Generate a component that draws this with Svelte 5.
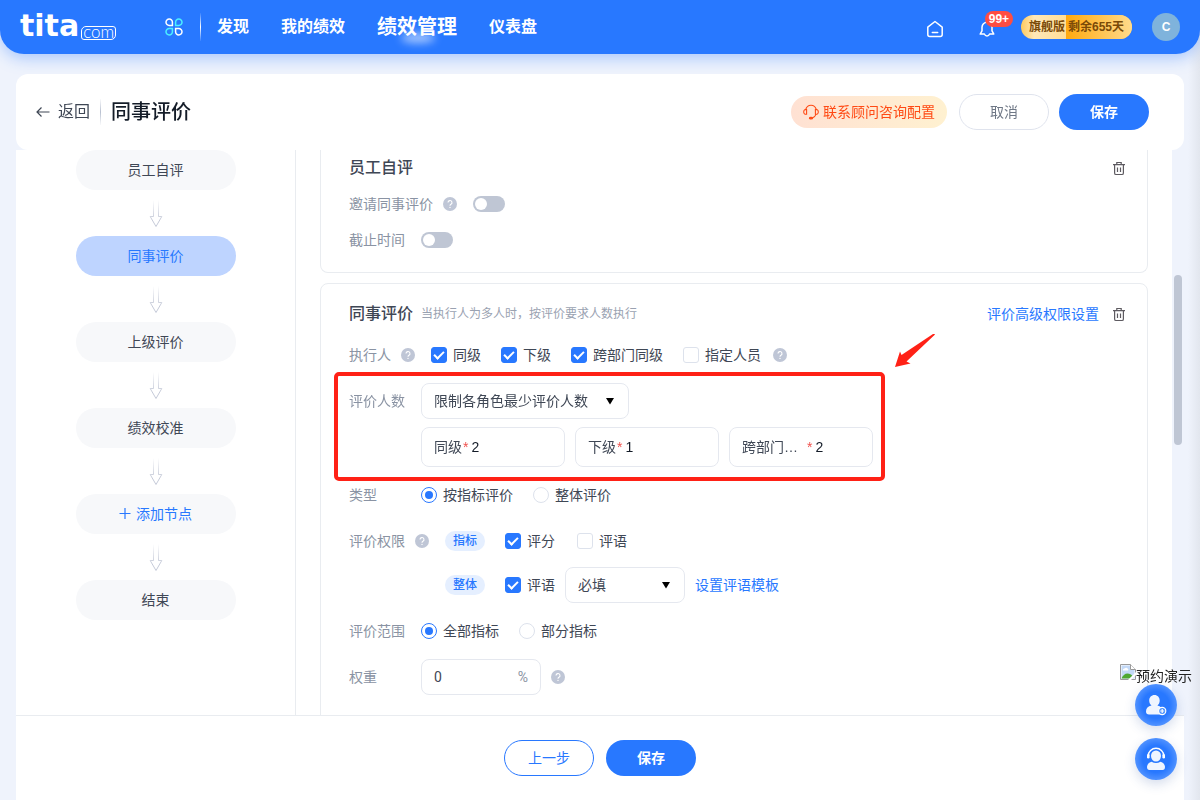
<script lang="ts">
  const nav = [
    { label: '发现', active: false },
    { label: '我的绩效', active: false },
    { label: '绩效管理', active: true },
    { label: '仪表盘', active: false }
  ];

  const steps = [
    { label: '员工自评', kind: '' },
    { label: '同事评价', kind: 'current' },
    { label: '上级评价', kind: '' },
    { label: '绩效校准', kind: '' },
    { label: '添加节点', kind: 'add' },
    { label: '结束', kind: '' }
  ];

  let executors = $state([
    { label: '同级', checked: true },
    { label: '下级', checked: true },
    { label: '跨部门同级', checked: true },
    { label: '指定人员', checked: false }
  ]);

  let counts = $state([
    { id: 'peer', label: '同级', value: '2' },
    { id: 'junior', label: '下级', value: '1' },
    { id: 'cross', label: '跨部门…', short: true, value: '2' }
  ]);

  let invite = $state(false);
  let deadline = $state(false);
  let evalType = $state('item');
  let scope = $state('all');
  let weight = $state('0');
</script>

{#snippet help()}
  <svg class="help" viewBox="0 0 14 14" aria-hidden="true">
    <circle cx="7" cy="7" r="7" fill="#bfc6d6" />
    <path d="M5 5.6a2 2 0 1 1 3 1.7c-.7.4-1 .7-1 1.4" fill="none" stroke="#fff" stroke-width="1.1" />
    <circle cx="7" cy="10.4" r=".7" fill="#fff" />
  </svg>
{/snippet}

{#snippet trash()}
  <button class="trash" aria-label="删除">
    <svg viewBox="0 0 16 16" fill="none" stroke="#5d5a60" stroke-width="1.2">
      <path d="M2 4.700h12M5.800 4.500V2.500h4.400v2M3.600 4.700v8.200q0 1.600 1.400 1.600h6q1.400 0 1.400-1.600V4.700M6.500 7.500v4.400M9.500 7.500v4.400" />
    </svg>
  </button>
{/snippet}

{#snippet caret()}
  <svg class="caret" viewBox="0 0 8 8" aria-hidden="true"><path d="M0 1h8L4 7.400z" fill="#000" /></svg>
{/snippet}

<div class="page">
  <header class="topbar">
    <a class="logo" href="/" aria-label="tita.com">
      <span class="logo-name">tita</span><span class="logo-com">com</span>
    </a>
    <button class="apps" aria-label="应用">
      <svg viewBox="0 0 18 18" fill="none" stroke-width="1.5">
        <path d="M7.400 7.400H4.300A3.200 3.200 0 1 1 7.400 4.300z" stroke="#fff" />
        <path d="M10.600 7.400h3.100a3.200 3.200 0 1 0-3.100-3.100z" stroke="#4cf0ff" />
        <path d="M7.400 10.600H4.300a3.200 3.200 0 1 0 3.100 3.100z" stroke="#4cf0ff" />
        <path d="M10.600 10.600h3.100a3.200 3.200 0 1 1-3.100 3.100z" stroke="#fff" />
      </svg>
    </button>
    <nav>
      {#each nav as item}
        <a href="#{item.label}" class:active={item.active}>{item.label}</a>
      {/each}
    </nav>
    <div class="tools">
      <button class="tool" aria-label="首页">
        <svg viewBox="0 0 18 18" fill="none" stroke="#fff" stroke-width="1.5" stroke-linejoin="round" stroke-linecap="round">
          <path d="M1.800 7.200 9 1.500l7.200 5.700v7.300q0 2-2 2H3.800q-2 0-2-2zM6.300 12.400h5.400" />
        </svg>
      </button>
      <button class="tool bell" aria-label="通知">
        <svg viewBox="0 0 18 18" fill="none" stroke="#fff" stroke-width="1.5" stroke-linejoin="round" stroke-linecap="round">
          <path d="M9 2.200a5 5 0 0 0-5 5v3.600L2.200 14h4.200q.8 2 2.600 2t2.600-2h4.200L14 10.800V7.200a5 5 0 0 0-5-5zM9 1v1" />
        </svg>
        <span class="badge">99+</span>
      </button>
      <div class="plan"><span>旗舰版</span><span class="left-days">剩余655天</span></div>
      <div class="avatar">C</div>
    </div>
  </header>

  <main>
    <div class="titlebar">
      <a class="back" href="#back">
        <svg viewBox="0 0 14 14" fill="none" stroke="#3f4755" stroke-width="1.2"><path d="M13.500 7H1M5.500 2.500 1 7l4.500 4.500" /></svg>
        返回
      </a>
      <h1>同事评价</h1>
      <div class="actions">
        <button class="consult">
          <svg viewBox="0 0 16 16" fill="none" stroke="#ff4a14" stroke-width="1.1" stroke-linecap="round">
            <path d="M2.600 5.600C3.500 2.700 5.500 1.300 8 1.300s4.500 1.400 5.400 4.300M3.600 5.400v4.800C1.900 10.600.7 9.600.7 7.900s1.200-2.700 2.900-2.500M12.400 5.400c1.700-.2 2.900.8 2.900 2.500s-1.200 2.700-2.900 2.300zM13 10.400q-1.200 3-3.600 3.600" />
            <ellipse cx="8" cy="14.200" rx="1.600" ry=".8" fill="#ff4a14" />
          </svg>
          联系顾问咨询配置
        </button>
        <button class="btn plain">取消</button>
        <button class="btn primary">保存</button>
      </div>
    </div>

    <div class="workspace">
      <aside class="flow">
        {#each steps as step, i}
          {#if i > 0}
            <svg class="flow-arrow" viewBox="0 0 14 46" fill="none" aria-hidden="true">
              <defs>
                <linearGradient id="fade{i}" gradientUnits="userSpaceOnUse" x1="0" y1="10" x2="0" y2="30">
                  <stop offset="0" stop-color="#c5cad8" stop-opacity="0" />
                  <stop offset="1" stop-color="#c5cad8" />
                </linearGradient>
              </defs>
              <path d="M4.500 10v16.500H1.200L7 36.500l5.800-10H9.500V10" stroke="url(#fade{i})" />
            </svg>
          {/if}
          <button class="step {step.kind}">
            {#if step.kind === 'add'}
              <svg viewBox="0 0 12 12" stroke="#2878ff" stroke-width="1.2"><path d="M6 0v11M.5 5.500h11" /></svg>
            {/if}
            {step.label}
          </button>
        {/each}
      </aside>

      <div class="content">
        <section class="card clipped">
          <div class="card-head">
            <h2>员工自评</h2>
            {@render trash()}
          </div>
          <div class="row">
            <label class="name" for="invite">邀请同事评价 {@render help()}</label>
            <input id="invite" class="switch" type="checkbox" role="switch" bind:checked={invite} />
          </div>
          <div class="row">
            <label class="name" for="deadline">截止时间</label>
            <input id="deadline" class="switch" type="checkbox" role="switch" bind:checked={deadline} />
          </div>
        </section>

        <section class="card peer">
          <div class="card-head">
            <h2>同事评价</h2>
            <span class="hint">当执行人为多人时，按评价要求人数执行</span>
            <a class="link" href="#advanced">评价高级权限设置</a>
            {@render trash()}
          </div>

          <div class="rows">
            <div class="row">
              <span class="name">执行人 {@render help()}</span>
              <div class="options">
                {#each executors as ex}
                  <label class="option"><input type="checkbox" bind:checked={ex.checked} />{ex.label}</label>
                {/each}
              </div>
              <span class="after">{@render help()}</span>
            </div>

            <div class="group highlight">
              <div class="row">
                <label class="name" for="limit">评价人数</label>
                <div class="select wide">
                  <select id="limit"><option>限制各角色最少评价人数</option></select>
                  {@render caret()}
                </div>
              </div>
              <div class="counts">
                {#each counts as c}
                  <div class="count">
                    <label for={c.id} class:short={c.short}>{c.label}</label>
                    <i>*</i>
                    <input id={c.id} type="text" bind:value={c.value} />
                  </div>
                {/each}
              </div>
              <svg class="pointer" viewBox="0 0 40 34" aria-hidden="true">
                <path d="M40 0 38 0 6.500 21 5 17.500 0 33 15.500 29.500 11.500 27.500 39.500 1z" fill="#ff2116" />
              </svg>
            </div>

            <div class="row">
              <span class="name">类型</span>
              <div class="options">
                <label class="option"><input type="radio" value="item" bind:group={evalType} />按指标评价</label>
                <label class="option"><input type="radio" value="whole" bind:group={evalType} />整体评价</label>
              </div>
            </div>

            <div class="group">
              <div class="row">
                <span class="name">评价权限 {@render help()}</span>
                <div class="rights">
                  <span class="tag">指标</span>
                  <label class="option"><input type="checkbox" checked />评分</label>
                  <label class="option"><input type="checkbox" />评语</label>
                </div>
              </div>
              <div class="row second">
                <span class="tag">整体</span>
                <label class="option"><input type="checkbox" checked />评语</label>
                <div class="select narrow">
                  <select aria-label="评语要求"><option>必填</option></select>
                  {@render caret()}
                </div>
                <a class="link" href="#template">设置评语模板</a>
              </div>
            </div>

            <div class="row">
              <span class="name">评价范围</span>
              <div class="options">
                <label class="option"><input type="radio" value="all" bind:group={scope} />全部指标</label>
                <label class="option"><input type="radio" value="part" bind:group={scope} />部分指标</label>
              </div>
            </div>

            <div class="row">
              <label class="name" for="weight">权重</label>
              <div class="weight">
                <input id="weight" type="text" bind:value={weight} />
                <span>%</span>
              </div>
              <span class="near">{@render help()}</span>
            </div>
          </div>
        </section>
      </div>

      <div class="rail"><div class="thumb"></div></div>
    </div>

    <footer>
      <button class="btn outline">上一步</button>
      <button class="btn primary">保存</button>
    </footer>
  </main>

  <div class="float">
    <a class="demo" href="#demo">
      <svg viewBox="0 0 16 16" aria-hidden="true">
        <path d="M.5.500h10l5 5v10H.500z" fill="#fff" stroke="#9a9a9a" />
        <path d="M1.500 1.500h8.500v4h4.500v9h-13z" fill="#c3d9f7" />
        <path d="M3 6.500a1.500 1.500 0 0 1 1.500-2 2 2 0 0 1 3.500.5 1 1 0 0 1 0 1.500z" fill="#fff" />
        <path d="M1.500 14.500c1-3 3.500-5 6-5 2 0 4 1 5 2.500l-3 2.500z" fill="#4ea832" />
        <path d="M16 8 8 16h3l5-5zM10.500.500v5h5z" fill="#fff" />
        <path d="M10.500.500v5h5" fill="none" stroke="#9a9a9a" />
      </svg>
      <span>预约演示</span>
    </a>
    <button class="bubble" aria-label="添加联系人">
      <svg viewBox="0 0 42 42" fill="#fff">
        <path d="M19.500 11c3 0 5.200 2.400 5.200 5.600 0 2.200-.9 4-2.300 5 3.300.8 5.200 3 5.400 5.800-1 3-3 3.100-4 3.100H14c-2 0-3-1-3-3 0-3.200 2-5.200 5.500-5.900-1.400-1-2.300-2.800-2.300-5 0-3.200 2.200-5.600 5.300-5.600z" fill-opacity=".93" />
        <circle cx="27.200" cy="27" r="3.600" fill="#4b93ff" stroke="#fff" stroke-width="1.2" />
        <path d="M27.200 25v4M25.200 27h4" stroke="#fff" stroke-width="1.2" />
      </svg>
    </button>
    <button class="bubble" aria-label="在线客服">
      <svg viewBox="0 0 42 42" fill="#fff">
        <ellipse cx="21" cy="18" rx="5" ry="5.600" fill-opacity=".93" />
        <path d="M16.500 23.800q4.500 2.400 9 0 4 1 4.500 5 0 3.200-2.500 3.200h-13q-2.500 0-2.500-3.200.5-4 4.500-5z" fill-opacity=".93" />
        <path d="M13.300 17.500a7.700 7.200 0 0 1 15.400 0" fill="none" stroke="#fff" stroke-width="1.4" />
        <rect x="12" y="16" width="2.600" height="4.600" rx="1.300" />
        <rect x="27.400" y="16" width="2.600" height="4.600" rx="1.300" />
      </svg>
    </button>
  </div>
</div>

<style>
  :global(body) { margin: 0; }

  .page {
    --blue: #2878ff;
    --line: #e9ecf0;
    display: flex;
    flex-direction: column;
    height: 100vh;
    overflow: hidden;
    background: linear-gradient(to left, #e2e6ee, #eff3fc 12px);
    color: #3f4755;
    font: 14px/20px Roboto, "Noto Sans CJK SC", sans-serif;
  }
  .page *, .page *::before, .page *::after { box-sizing: border-box; }
  svg { display: block; flex: none; }
  a { color: inherit; text-decoration: none; }
  button { padding: 0; border: 0; background: none; color: inherit; font: inherit; cursor: pointer; }
  input, select { margin: 0; color: inherit; font: inherit; }

  /* Top bar */
  .topbar {
    display: flex;
    align-items: center;
    height: 54px;
    flex: none;
    padding: 0 20px;
    border-radius: 0 0 24px 24px;
    background: var(--blue);
    box-shadow: 0 4px 16px rgba(40, 120, 255, 0.36);
    color: #fff;
  }
  .logo { display: flex; align-items: flex-end; gap: 2px; width: 98px; height: 26px; margin-right: 47px; }
  .logo-name { font: 700 30px/28px "DejaVu Sans", sans-serif; }
  .logo-com {
    height: 14px;
    padding: 0 1px;
    border: 1px solid #fff;
    border-radius: 5px 3px;
    font: 300 17px/9px Lato, sans-serif;
  }
  .apps { padding-right: 17px; }
  .apps svg { width: 18px; height: 18px; }
  nav {
    display: flex;
    align-items: center;
    gap: 32px;
    height: 28px;
    padding-left: 16px;
    border-left: 1px solid;
    border-image: linear-gradient(transparent, #fff, transparent) 1;
    font-size: 16px;
    font-weight: 700;
  }
  nav a { position: relative; }
  nav .active { font-size: 20px; }
  nav .active::after {
    content: '';
    position: absolute;
    left: 24px;
    bottom: -6px;
    width: 34px;
    height: 10px;
    border-radius: 50%;
    background: rgba(255, 255, 255, 0.6);
    filter: blur(4px);
  }
  .tools { display: flex; align-items: center; margin-left: auto; }
  .tool { position: relative; margin-right: 34px; padding-top: 4px; }
  .tool svg { width: 18px; height: 18px; }
  .bell { margin-right: 25px; }
  .badge {
    position: absolute;
    left: 7px;
    top: -5px;
    width: 28px;
    height: 16px;
    border-radius: 8px;
    background: #ff4d42;
    font: 700 12px/16px "Liberation Sans", sans-serif;
    text-align: center;
  }
  .plan {
    display: flex;
    overflow: hidden;
    margin-right: 20px;
    border-radius: 12px;
    background: linear-gradient(90deg, #ffc95c, #ffe8b8 12%, #ffc74f);
    color: #7a4a08;
    font: 700 12px/24px "Liberation Sans", "Noto Sans CJK SC", sans-serif;
  }
  .plan span { padding-left: 8px; }
  .plan .left-days { margin-left: 1px; padding: 0 8px 0 2px; background: linear-gradient(90deg, #ffa90f, #ffdb8c); }
  .avatar {
    width: 28px;
    border-radius: 50%;
    background: #7fb3dc;
    font: 700 12px/28px "Liberation Sans", sans-serif;
    text-align: center;
  }

  main { display: flex; flex-direction: column; flex: 1; min-height: 0; padding: 20px 16px 0; }

  /* Title bar */
  .titlebar {
    z-index: 1;
    display: flex;
    align-items: center;
    height: 76px;
    flex: none;
    padding: 0 35px 0 20px;
    border-radius: 12px;
    background: #fff;
  }
  .back { display: flex; align-items: center; gap: 8px; font-size: 16px; line-height: 22px; }
  .back svg { width: 14px; height: 14px; }
  h1 {
    margin: 0 0 0 10px;
    padding-left: 10px;
    border-left: 1px solid;
    border-image: linear-gradient(transparent, #b8c0d0, transparent) 1;
    color: #141c28;
    font-size: 20px;
    font-weight: 500;
    line-height: 26px;
  }
  .actions { display: flex; align-items: center; gap: 10px; margin-left: auto; }
  .consult {
    display: flex;
    align-items: center;
    gap: 4px;
    height: 32px;
    margin-right: 2px;
    padding: 0 12px;
    border-radius: 16px;
    background: linear-gradient(90deg, #ffe1d3, #fff1d0);
    color: #ff4a14;
  }
  .consult svg { width: 16px; height: 16px; }
  .btn { width: 90px; height: 36px; border: 1px solid transparent; border-radius: 18px; }
  .plain { border-color: #dfe3ed; color: #6f7886; }
  .primary { background: var(--blue); color: #fff; font-weight: 700; }
  .outline { border-color: var(--blue); color: var(--blue); }

  .workspace { display: flex; flex: 1; min-height: 0; }

  /* Flow steps */
  .flow {
    display: flex;
    flex-direction: column;
    align-items: center;
    width: 280px;
    flex: none;
    border-right: 1px solid var(--line);
    background: #fff;
  }
  .step {
    display: flex;
    align-items: center;
    justify-content: center;
    gap: 5px;
    width: 160px;
    height: 40px;
    flex: none;
    border-radius: 20px;
    background: #f7f8fa;
  }
  .current { background: #bed4ff; color: var(--blue); }
  .add { color: var(--blue); }
  .step svg { width: 12px; height: 12px; }
  .flow-arrow { width: 14px; height: 46px; }

  /* Settings */
  .content { flex: 1; overflow-y: auto; scrollbar-width: none; padding: 0 24px; background: #fff; }
  .card { padding: 12px 20px 40px 28px; border: 1px solid var(--line); border-radius: 8px; }
  .clipped { margin-bottom: 10px; padding-top: 0; padding-bottom: 14px; border-top: 0; border-radius: 0 0 8px 8px; }
  .card-head { display: flex; align-items: center; height: 36px; }
  .peer .card-head { margin-bottom: 5px; }
  h2 { margin: 0; font-size: 16px; font-weight: 500; }
  .hint { margin-left: 8px; color: #9aa2b1; font-size: 12px; line-height: 22px; }
  .card-head .link { margin-left: auto; }
  .trash { margin-left: 12px; }
  .card-head h2 + .trash { margin-left: auto; }
  .trash svg { width: 16px; height: 16px; }
  .link { color: var(--blue); }
  .rows { display: flex; flex-direction: column; gap: 10px; }
  .group { display: flex; flex-direction: column; gap: 8px; }
  .row { display: flex; align-items: center; height: 36px; }
  .name { display: flex; align-items: center; gap: 10px; min-width: 56px; margin-right: 16px; color: #8a93a3; }
  .help { width: 14px; height: 14px; }
  .after { margin-left: 12px; }
  .near { margin-left: 10px; }
  .options { display: flex; gap: 20px; }
  .option { display: flex; align-items: center; gap: 6px; }
  .rights { display: flex; align-items: center; gap: 22px; }
  .tag {
    width: 40px;
    border-radius: 10px;
    background: #e5efff;
    color: var(--blue);
    font-size: 12px;
    font-weight: 500;
    text-align: center;
  }
  .rights .tag { margin-right: -2px; }
  .second { gap: 10px; padding-left: 96px; }
  .second .tag { margin-right: 10px; }

  .option input {
    appearance: none;
    display: grid;
    place-items: center;
    width: 16px;
    height: 16px;
    border: 1px solid #dde2ec;
    border-radius: 3px;
    background: #fff;
  }
  .option input[type='radio'] { border-radius: 50%; }
  .option input:checked { border-color: var(--blue); }
  .option input[type='checkbox']:checked { background: var(--blue); }
  .option input[type='radio']:checked::before { content: ''; width: 8px; height: 8px; border-radius: 50%; background: var(--blue); }
  .option input[type='checkbox']:checked::before {
    content: '';
    width: 10px;
    height: 6px;
    margin-bottom: 3px;
    border: solid #fff;
    border-width: 0 0 2px 2px;
    transform: rotate(-45deg);
  }

  .switch {
    appearance: none;
    width: 32px;
    height: 16px;
    padding: 2px;
    border-radius: 8px;
    background: #bfc6d4;
  }
  .switch::before { content: ''; display: block; width: 12px; height: 12px; border-radius: 50%; background: #fff; }
  .switch:checked { background: var(--blue); }
  .switch:checked::before { margin-left: auto; }

  .select { position: relative; }
  .wide { width: 208px; }
  .narrow { width: 120px; }
  .select select {
    appearance: none;
    width: 100%;
    height: 36px;
    padding: 0 12px;
    border: 1px solid #e5e8ef;
    border-radius: 8px;
    background: #fff;
  }
  .caret { position: absolute; right: 15px; top: 14px; width: 8px; height: 8px; pointer-events: none; }
  .counts { display: flex; gap: 10px; padding-left: 72px; }
  .count {
    display: flex;
    align-items: center;
    width: 144px;
    height: 40px;
    padding: 0 12px;
    border: 1px solid #e5e8ef;
    border-radius: 8px;
    font-family: "Liberation Sans", "Noto Sans CJK SC", sans-serif;
  }
  .count label { flex: none; }
  .count .short { padding-right: 8px; }
  .count i { padding: 0 3px 0 1px; color: #f0504c; font-style: normal; }
  .count input { width: 100%; min-width: 0; padding: 0; border: 0; outline: 0; background: none; color: #141c28; }
  .weight {
    display: flex;
    align-items: center;
    width: 120px;
    height: 36px;
    padding: 0 12px;
    border: 1px solid #e5e8ef;
    border-radius: 8px;
  }
  .weight input { width: 100%; min-width: 0; padding: 0; border: 0; outline: 0; background: none; }
  .weight span { color: #8a93a3; }

  /* Marked area */
  .highlight { position: relative; }
  .highlight::after {
    content: '';
    position: absolute;
    left: -15px;
    top: -11px;
    bottom: -14px;
    width: 551px;
    border: 4px solid #ff2116;
    border-radius: 5px;
    pointer-events: none;
  }
  .pointer { position: absolute; left: 546px; top: -49px; width: 40px; height: 34px; }

  .rail { width: 12px; flex: none; padding: 125px 2px 0; }
  .thumb { height: 170px; border-radius: 4px; background: #bfc6d4; }

  footer {
    display: flex;
    justify-content: center;
    gap: 12px;
    padding: 24px 0;
    border-top: 1px solid var(--line);
    background: #fff;
  }

  /* Floating helpers */
  .float { position: fixed; right: 8px; bottom: 20px; display: flex; flex-direction: column; align-items: center; gap: 12px; }
  .demo { display: flex; margin-bottom: -12px; color: #222; }
  .demo svg { width: 16px; height: 16px; }
  .demo span { line-height: 24px; height: 20px; }
  .bubble {
    width: 42px;
    height: 42px;
    border-radius: 50%;
    background: radial-gradient(circle, #2878ff 45%, #7fb0ff);
    box-shadow: 0 4px 12px rgba(40, 80, 160, 0.2);
  }
</style>
